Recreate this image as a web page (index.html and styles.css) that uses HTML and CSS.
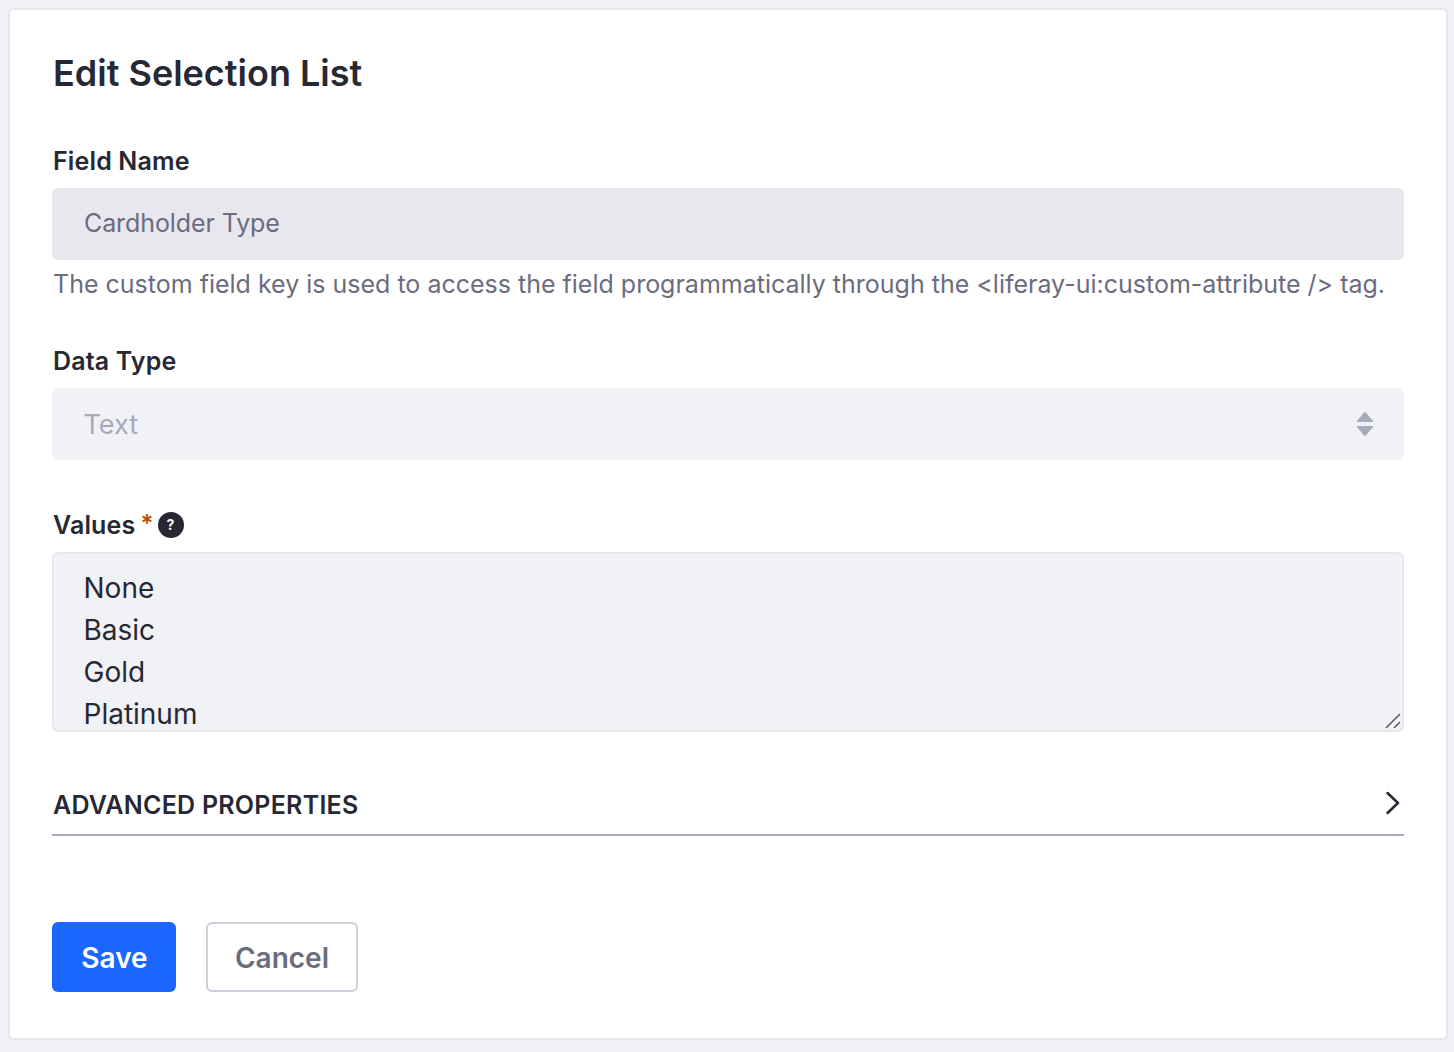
FILE: index.html
```html
<!DOCTYPE html>
<html lang="en">
<head>
  <meta charset="UTF-8">
  <meta name="viewport" content="width=device-width, initial-scale=1.0">
  <title>Edit Selection List</title>
  <link rel="stylesheet" href="styles.css">
</head>
<body>
  <div class="card">
    <h1 class="card-title">Edit Selection List</h1>

    <!-- Field Name -->
    <div class="field field-name">
      <div class="field-label">Field Name</div>
      <div class="input input-readonly">Cardholder Type</div>
      <div class="help-text">The custom field key is used to access the field programmatically through the &lt;liferay-ui:custom-attribute /&gt; tag.</div>
    </div>

    <!-- Data Type -->
    <div class="field field-type">
      <div class="field-label">Data Type</div>
      <div class="input input-select">
        <span>Text</span>
        <svg class="select-arrows" width="18" height="26" viewBox="0 0 18 26">
          <path d="M9 0.5 L17 10 Q17.500 11 16.500 11 H1.500 Q0.500 11 1 10 Z"/>
          <path d="M9 25.500 L17 16 Q17.500 15 16.500 15 H1.500 Q0.500 15 1 16 Z"/>
        </svg>
      </div>
    </div>

    <!-- Values -->
    <div class="field field-values">
      <div class="field-label label-row">
        <span>Values</span>
        <span class="required">*</span>
        <span class="help-badge">?</span>
      </div>
      <div class="textarea">
        <div>None</div>
        <div>Basic</div>
        <div>Gold</div>
        <div>Platinum</div>
        <svg class="resize-handle" width="16" height="16" viewBox="0 0 16 16">
          <path d="M1 15 L15 1 M9 15 L15 9"/>
        </svg>
      </div>
    </div>

    <!-- Advanced Properties -->
    <div class="panel-header">
      <span>ADVANCED PROPERTIES</span>
      <svg class="panel-chevron" width="14" height="24" viewBox="0 0 14 24">
        <path d="M1.500 2 L12 12 L1.500 22"/>
      </svg>
    </div>

    <div class="actions">
      <button class="btn btn-primary">Save</button>
      <button class="btn btn-secondary">Cancel</button>
    </div>
  </div>
</body>
</html>
```

FILE: styles.css
```css
/* Global Styles */
* {
  box-sizing: border-box;
}

body {
  font-family: 'Inter', 'Liberation Sans', sans-serif;
  margin: 0;
  padding: 8px 6px 12px 8px;
  background: #f1f2f5;
  color: #272833;
}

/* Card */
.card {
  height: 1032px;
  background: #fff;
  border: 2px solid #e7e7ed;
  border-radius: 6px;
  padding: 41px 42px 0 42px;
}

.card-title {
  margin: 0;
  font-size: 36px;
  line-height: 44px;
  font-weight: 600;
  padding-left: 1px;
}

/* Fields */
.field-name {
  margin-top: 51px;
}

.field-type {
  margin-top: 46px;
}

.field-values {
  margin-top: 50px;
}

.field-label {
  font-size: 25px;
  line-height: 30px;
  font-weight: 600;
  letter-spacing: 0.15px;
  padding-left: 1px;
  margin-bottom: 12px;
}

.label-row {
  display: flex;
  align-items: center;
  gap: 5px;
  height: 30px;
}

.required {
  color: #b95000;
  font-size: 24px;
  line-height: 30px;
  margin-top: -2px;
}

.help-badge {
  width: 26px;
  height: 26px;
  border-radius: 50%;
  background: #272833;
  color: #fff;
  font-size: 14px;
  font-weight: 700;
  display: flex;
  align-items: center;
  justify-content: center;
  margin-left: -1px;
}

.input {
  height: 72px;
  border-radius: 6px;
  padding: 0 32px 2px;
  font-size: 25px;
  display: flex;
  align-items: center;
}

.input-readonly {
  background: #e7e7ed;
  color: #6b6c7e;
  letter-spacing: -0.1px;
}

.input-select {
  background: #f1f2f5;
  color: #a7a9bc;
  justify-content: space-between;
  padding: 0 30px 0 31.5px;
  font-size: 27px;
}

.select-arrows {
  fill: #a7a9bc;
}

.help-text {
  margin-top: 8px;
  font-size: 25px;
  line-height: 32px;
  color: #6b6c7e;
  padding-left: 1px;
  white-space: nowrap;
}

.textarea {
  position: relative;
  height: 180px;
  background: #f1f2f5;
  border: 2px solid #e7e7ed;
  border-radius: 6px;
  padding: 13px 29.5px 0;
  font-size: 28px;
  line-height: 42px;
  overflow: hidden;
}

.resize-handle {
  position: absolute;
  right: 1px;
  bottom: 1px;
  fill: none;
  stroke: #55565f;
  stroke-width: 1.5;
}

/* Advanced Properties */
.panel-header {
  margin-top: 52px;
  height: 52px;
  border-bottom: 2px solid #a7a9bc;
  display: flex;
  justify-content: space-between;
  align-items: flex-start;
  font-size: 25px;
  line-height: 42px;
  font-weight: 600;
  letter-spacing: 0.25px;
  padding: 0 4px 0 1px;
}

.panel-chevron {
  fill: none;
  stroke: #272833;
  stroke-width: 2.500;
  stroke-linecap: round;
  stroke-linejoin: round;
  margin-top: 7px;
}

/* Buttons */
.actions {
  display: flex;
  gap: 30px;
  margin-top: 86px;
}

.btn {
  height: 70px;
  border-radius: 6px;
  font-family: inherit;
  font-size: 28px;
  font-weight: 600;
  padding: 2px 0 0;
}

.btn-primary {
  width: 124px;
  background: #1a66ff;
  color: #fff;
  border: none;
  padding-left: 1px;
}

.btn-secondary {
  width: 152px;
  background: #fff;
  color: #6b6c7e;
  border: 2px solid #cdced9;
}
```
